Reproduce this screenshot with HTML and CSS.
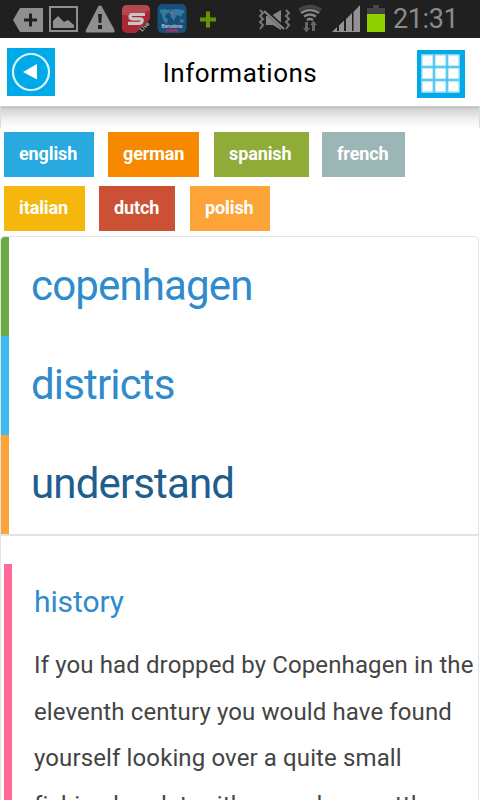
FILE: index.html
```
<!DOCTYPE html>
<html lang="en">
<head>
<meta charset="utf-8">
<meta name="viewport" content="width=device-width, user-scalable=no">
<title>Informations</title>
<link rel="stylesheet" href="styles.css">
</head>
<body>
<div class="statusbar">
  <svg class="notifications" width="240" height="38" viewBox="0 0 240 38">
    <path fill="#8f8f8f" d="M20 8h23v24H20L13 20z"/>
    <path stroke="#202020" stroke-width="3" d="M24 20h13M30.500 13.500v13"/>
    <path fill="none" stroke="#8f8f8f" stroke-width="2" d="M50 7h27v24H50z"/>
    <path fill="#8f8f8f" d="M53 28v-7l5-5 6 6 4-2 6 5v3z"/>
    <path fill="#8f8f8f" d="M98.500 6q1.500-1 3 0l13 24q.5 2-1 2.500H87q-2-.5-1-2.500z"/>
    <path fill="#202020" d="M98 14h4l-.7 9h-2.600zM98 25h4v4h-4z"/>
    <rect x="122" y="5" width="28" height="28" rx="5" fill="#a92932"/>
    <path fill="#bd575e" d="M127 5h18q5 0 5 5-12 7-28 5v-5q0-5 5-5z" opacity=".65"/>
    <path fill="#202020" d="M150 19v9q0 5-5 5h-9z"/>
    <path fill="none" stroke="#c9c5c6" stroke-width="3.200" d="M145 14.500h-12q-3 0-3 2.200t3 2.200h7q3 0 2 2.500-.5 2-3 2h-11"/>
    <text x="142" y="32" class="live" transform="rotate(-45 142 32)">Live</text>
    <rect x="157.500" y="4" width="29" height="29" rx="5" fill="#194f7a"/>
    <path fill="#347ca5" d="M159 10l6-1 3 1 3-1-2 4-3 1-1 3 3 3-2 4-3-5-1-4zM171 10l5-1 7 1 2 2-3 2-1 3-3-2-2 1-2 5-3-4-1-4zM180 19l4 1-1 3-3-1z"/>
    <path fill="#b35c65" d="M170 12h3v2h-3z"/>
    <text x="161.500" y="27.500" class="barcelona" textLength="21">Barcelona</text>
    <path fill="#b52c68" d="M166 29.500h12v2h-12z"/>
    <path stroke="#609700" stroke-width="4" d="M200 19.500h16M208 11.500v16"/>
  </svg>
  <svg class="signals" width="150" height="38" viewBox="240 0 150 38">
    <path fill="#858585" d="M266 16h5l10-6v20l-8-5h-7z"/>
    <path stroke="#202020" stroke-width="4" d="M263 9l22 20"/>
    <path stroke="#858585" stroke-width="2.200" d="M264 11l20 18"/>
    <path fill="none" stroke="#777" stroke-width="2" d="M260 10l3 3-3 3 3 3-3 3 3 3-3 4M286 10l3 3-3 3 3 3-3 3 3 3-3 4"/>
    <path fill="none" stroke="#444" stroke-width="3.500" d="M299 10q11-7 22 0"/>
    <path fill="none" stroke="#858585" stroke-width="2.500" d="M301 13q9-6 18 0M304 16.500q6-4 12 0M307 20q3-2 6 0"/>
    <path fill="#666" d="M305 22h3v6h2l-3.500 4.500L303 28h2zM312 31v-6h-2l3.500-4.500L317 25h-2v6z"/>
    <path fill="#929292" d="M332 32l5-5v5zM339 25.500l5-5V32h-5zM346 19l6-6v19h-6zM353.500 12l6.500-7v27h-6.500z"/>
    <path stroke="#929292" d="M333 31.500h27"/>
    <path fill="#444" d="M373 5h6v3h6v6h-18V8h6z"/>
    <path fill="#8fcf00" d="M367 14h18v18h-18z"/>
  </svg>
  <span class="clock">21:31</span>
</div>

<header class="topbar">
  <a href="#" class="button back" aria-label="Back">
    <svg width="48" height="48" viewBox="0 0 48 48">
      <circle cx="24" cy="24" r="18" fill="none" stroke="#e2f5fc" stroke-width="2.200"/>
      <path fill="#fff" d="M16 24l14-8v15.500z"/>
    </svg>
  </a>
  <h1>Informations</h1>
  <a href="#" class="button menu" aria-label="Menu">
    <svg width="48" height="48" viewBox="0 0 48 48">
      <rect x="4" y="4" width="39" height="39" rx="1" fill="#85d6f5"/>
      <path fill="#fff" d="M5.500 5.500h10v10h-10zM18.500 5.500h10v10h-10zM31.500 5.500h10v10h-10zM5.500 18.500h10v10h-10zM18.500 18.500h10v10h-10zM31.500 18.500h10v10h-10zM5.500 31.500h10v10h-10zM18.500 31.500h10v10h-10zM31.500 31.500h10v10h-10z"/>
      <path stroke="#32bcec" d="M4 17h39M4 30h39M17 4v39M30 4v39"/>
    </svg>
  </a>
</header>
<div class="shade"></div>

<nav class="languages">
  <a href="#" class="english">english</a>
  <a href="#" class="german">german</a>
  <a href="#" class="spanish">spanish</a>
  <a href="#" class="french">french</a>
  <a href="#" class="italian">italian</a>
  <a href="#" class="dutch">dutch</a>
  <a href="#" class="polish">polish</a>
</nav>

<div class="panel">
  <ul class="tabs">
    <li class="green"><a href="#">copenhagen</a></li>
    <li class="blue"><a href="#">districts</a></li>
    <li class="orange active"><a href="#">understand</a></li>
  </ul>
  <div class="article">
    <h2>history</h2>
    <p>If you had dropped by Copenhagen in the<br>
    eleventh century you would have found<br>
    yourself looking over a quite small<br>
    fishing hamlet, with some long settl</p>
  </div>
</div>
</body>
</html>
```
FILE: styles.css
```
* {
	box-sizing: border-box;
}
body {
	display: flex;
	flex-direction: column;
	margin: 0;
	height: 100vh;
	overflow: hidden;
	background: #fff;
	font-family: Roboto, sans-serif;
}
a {
	text-decoration: none;
}
svg {
	display: block;
}
.statusbar {
	display: flex;
	flex: none;
	height: 38px;
	background: #202020;
}
.live {
	font: bold 6px Roboto, sans-serif;
	fill: #aaa;
}
.barcelona {
	font: bold 5px Roboto, sans-serif;
	fill: #aebcc9;
}
.clock {
	margin-left: 3px;
	color: #8b8b8b;
	font-size: 27px;
	line-height: 38px;
	letter-spacing: -0.4px;
}
.topbar {
	display: flex;
	flex: none;
	justify-content: space-between;
	height: 69px;
	padding: 10px 15px 0 7px;
	border-bottom: 1px solid #d0d0d0;
}
.button {
	width: 48px;
	height: 48px;
	background: #00a9e8;
}
.menu {
	margin-top: 2px;
}
h1 {
	margin: 0;
	padding-left: 8px;
	font-size: 26px;
	font-weight: normal;
	line-height: 50px;
	letter-spacing: 0.5px;
}
.shade {
	flex: none;
	height: 21px;
	border: solid #ddd;
	border-width: 0 1px;
	background: linear-gradient(#bbb 0, #d2d2d2 2px, #eee 11px, #fff 21px);
}
.languages {
	display: flex;
	flex: none;
	flex-wrap: wrap;
	gap: 9px 14px;
	padding: 4px 4px 5px;
}
.languages a {
	height: 45px;
	padding-left: 15px;
	color: #fff;
	font-size: 18px;
	font-weight: bold;
	line-height: 44px;
	letter-spacing: -0.1px;
}
.english { width: 90px; background: #28a9df; }
.german { width: 91px; background: #f78900; }
.spanish { width: 95px; margin-left: 1px; background: #90ab38; }
.french { width: 83px; margin-left: -1px; background: #9cb5b5; }
.italian { width: 81px; background: #f5b70c; }
.dutch { width: 76px; background: #cc5034; }
.polish { width: 80px; margin-left: 1px; background: #fda438; }
.panel {
	display: flex;
	flex: 1;
	flex-direction: column;
	min-height: 0;
	margin-right: 1px;
	overflow: hidden;
	border: 1px solid #e3e3e3;
	border-bottom: 0;
	border-radius: 5px 5px 0 0;
}
.tabs {
	flex: none;
	margin: 0;
	padding: 0;
	list-style: none;
	border-bottom: 2px solid #e3e3e3;
}
.tabs li {
	height: 99px;
	padding-left: 22px;
	border-left: 8px solid;
}
.tabs a {
	color: #2f8bcc;
	font-size: 42px;
	line-height: 97px;
	letter-spacing: -0.85px;
}
.tabs .green { border-color: #6aaa43; }
.tabs .blue { border-color: #3dbbec; }
.tabs .orange { border-color: #fda438; }
.tabs .active a {
	color: #205e8e;
}
.article {
	flex: 1;
	min-height: 0;
	margin: 28px 0 0 3px;
	padding: 15px 0 0 22px;
	border-left: 8px solid #ff6998;
}
h2 {
	margin: 0;
	color: #2f8bcc;
	font-size: 30px;
	font-weight: normal;
	line-height: 46px;
	letter-spacing: -0.1px;
}
p {
	margin: 17px 0 0;
	color: #444;
	font-size: 24px;
	line-height: 46.5px;
	letter-spacing: 0.12px;
	white-space: nowrap;
}
```
